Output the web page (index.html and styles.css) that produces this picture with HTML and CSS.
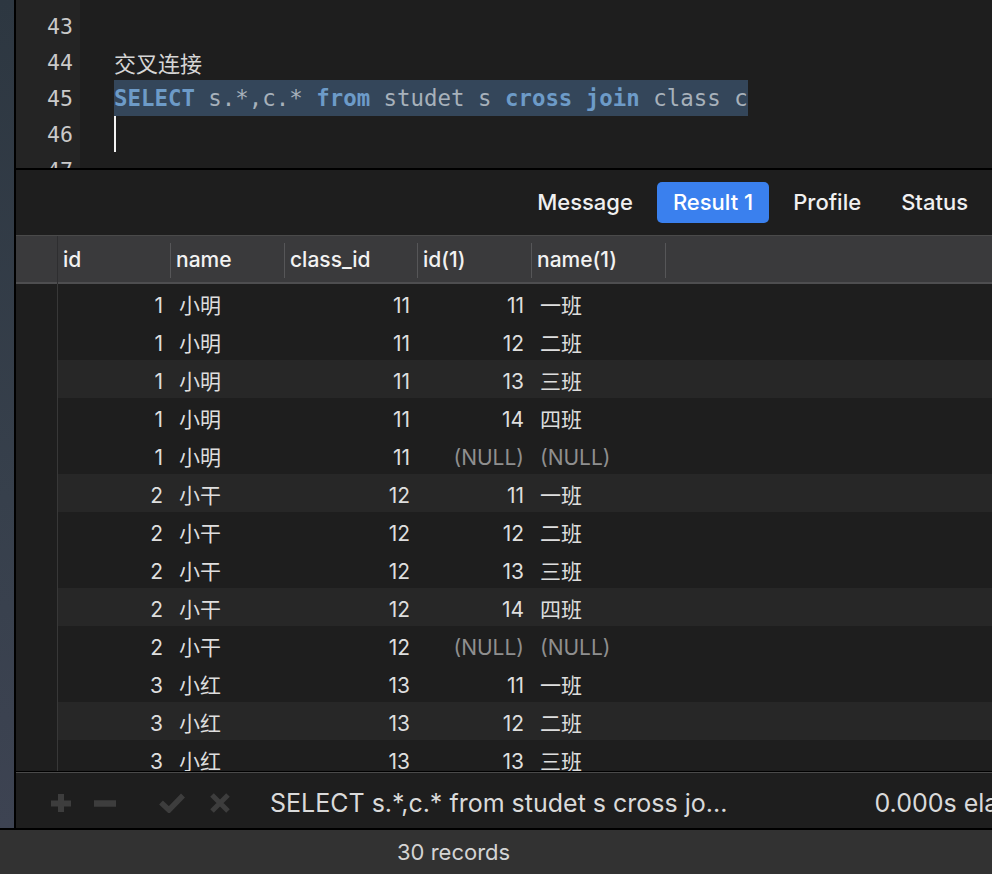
FILE: index.html
```html
<!DOCTYPE html>
<html lang="zh">
<head>
<meta charset="utf-8">
<title>Query</title>
<link rel="stylesheet" href="styles.css">
</head>
<body>
<div class="app">
  <div class="workspace">
    <div class="sidebar"></div>
    <div class="main">
      <div class="editor">
        <div class="gutter">
          <div class="ln">43</div>
          <div class="ln">44</div>
          <div class="ln">45</div>
          <div class="ln">46</div>
          <div class="ln">47</div>
        </div>
        <div class="code">
          <div class="line"></div>
          <div class="line comment">交叉连接</div>
          <div class="line"><span class="sel"><span class="kw">SELECT</span> s.*,c.* <span class="kw">from</span> studet s <span class="kw">cross</span> <span class="kw">join</span> class c</span></div>
          <div class="line"><span class="caret"></span></div>
          <div class="line"></div>
        </div>
      </div>
      <div class="tabs">
        <div class="tab">Message</div>
        <div class="tab active">Result 1</div>
        <div class="tab">Profile</div>
        <div class="tab">Status</div>
      </div>
      <div class="grid">
        <div class="head">
          <div class="hc first"></div>
          <div class="hc">id</div>
          <div class="hc">name</div>
          <div class="hc">class_id</div>
          <div class="hc">id(1)</div>
          <div class="hc">name(1)</div>
          <div class="hc rest"></div>
        </div>
        <div class="rows">
          <div class="row"><div class="c first"></div><div class="c num">1</div><div class="c">小明</div><div class="c num">11</div><div class="c num">11</div><div class="c">一班</div><div class="c"></div></div>
          <div class="row"><div class="c first"></div><div class="c num">1</div><div class="c">小明</div><div class="c num">11</div><div class="c num">12</div><div class="c">二班</div><div class="c"></div></div>
          <div class="row alt"><div class="c first"></div><div class="c num">1</div><div class="c">小明</div><div class="c num">11</div><div class="c num">13</div><div class="c">三班</div><div class="c"></div></div>
          <div class="row"><div class="c first"></div><div class="c num">1</div><div class="c">小明</div><div class="c num">11</div><div class="c num">14</div><div class="c">四班</div><div class="c"></div></div>
          <div class="row"><div class="c first"></div><div class="c num">1</div><div class="c">小明</div><div class="c num">11</div><div class="c num null">(NULL)</div><div class="c null">(NULL)</div><div class="c"></div></div>
          <div class="row alt"><div class="c first"></div><div class="c num">2</div><div class="c">小干</div><div class="c num">12</div><div class="c num">11</div><div class="c">一班</div><div class="c"></div></div>
          <div class="row"><div class="c first"></div><div class="c num">2</div><div class="c">小干</div><div class="c num">12</div><div class="c num">12</div><div class="c">二班</div><div class="c"></div></div>
          <div class="row"><div class="c first"></div><div class="c num">2</div><div class="c">小干</div><div class="c num">12</div><div class="c num">13</div><div class="c">三班</div><div class="c"></div></div>
          <div class="row alt"><div class="c first"></div><div class="c num">2</div><div class="c">小干</div><div class="c num">12</div><div class="c num">14</div><div class="c">四班</div><div class="c"></div></div>
          <div class="row"><div class="c first"></div><div class="c num">2</div><div class="c">小干</div><div class="c num">12</div><div class="c num null">(NULL)</div><div class="c null">(NULL)</div><div class="c"></div></div>
          <div class="row"><div class="c first"></div><div class="c num">3</div><div class="c">小红</div><div class="c num">13</div><div class="c num">11</div><div class="c">一班</div><div class="c"></div></div>
          <div class="row alt"><div class="c first"></div><div class="c num">3</div><div class="c">小红</div><div class="c num">13</div><div class="c num">12</div><div class="c">二班</div><div class="c"></div></div>
          <div class="row"><div class="c first"></div><div class="c num">3</div><div class="c">小红</div><div class="c num">13</div><div class="c num">13</div><div class="c">三班</div><div class="c"></div></div>
        </div>
      </div>
      <div class="toolbar">
        <svg class="ico plus" width="22" height="20" viewBox="0 0 22 20"><path d="M11 1v18M1 10.5h20" stroke="#3d3d3d" stroke-width="6" fill="none"/></svg>
        <svg class="ico minus" width="22" height="20" viewBox="0 0 22 20"><path d="M0 10.5h22" stroke="#3d3d3d" stroke-width="6.5" fill="none"/></svg>
        <svg class="ico check" width="26" height="20" viewBox="0 0 26 20"><path d="M2 9.5l8 7.5L24 2.5" stroke="#3d3d3d" stroke-width="5.5" fill="none"/></svg>
        <svg class="ico cross" width="20" height="20" viewBox="0 0 20 20"><path d="M2 2l16 16M18 2L2 18" stroke="#3d3d3d" stroke-width="5" fill="none"/></svg>
        <div class="sql">SELECT s.*,c.* from studet s cross jo...</div>
        <div class="elapsed">0.000s elapsed</div>
      </div>
    </div>
  </div>
  <div class="statusbar">30 records</div>
</div>
</body>
</html>
```

FILE: styles.css
```css
* { box-sizing: border-box; }
html, body { margin: 0; padding: 0; }
body {
  background: #1e1e1e;
  font-family: "Inter", "Noto Sans CJK SC", sans-serif;
  overflow: hidden;
}
.app {
  width: 992px;
  height: 874px;
  display: flex;
  flex-direction: column;
  overflow: hidden;
}
.workspace {
  flex: 1;
  display: flex;
  min-height: 0;
  border-bottom: 2px solid #000;
}
.sidebar {
  width: 16px;
  flex: none;
  background: linear-gradient(#2d3741, #37404c 60%, #3d4352);
  border-right: 2px solid #000;
}
.main {
  flex: 1;
  display: flex;
  flex-direction: column;
  min-width: 0;
}
.editor {
  height: 170px;
  flex: none;
  display: flex;
  overflow: hidden;
  border-bottom: 2px solid #000;
  background: #1e1e1e;
}
.gutter {
  width: 64px;
  flex: none;
  background: #242424;
  padding-top: 8px;
  padding-right: 7px;
  font-family: "DejaVu Sans Mono", monospace;
  font-size: 21.5px;
  color: #cacaca;
  text-align: right;
}
.ln { height: 36px; line-height: 37px; }
.code {
  flex: 1;
  padding-top: 8px;
  padding-left: 34px;
  font-family: "DejaVu Sans Mono", "Noto Sans CJK SC", monospace;
  font-size: 22.4px;
  color: #a7b1bb;
}
.line { height: 36px; line-height: 36px; white-space: pre; display: flex; }
.comment {
  font-family: "Noto Sans CJK SC", sans-serif;
  font-size: 22px;
  color: #d6d6d6;
}
.sel { background: #34465a; height: 36px; display: inline-block; line-height: 37px; }
.kw { color: #6d9bc8; font-weight: bold; }
.caret { width: 2px; height: 36px; background: #f2f2f2; display: inline-block; }
.tabs {
  height: 66px;
  flex: none;
  display: flex;
  justify-content: flex-end;
  align-items: center;
  gap: 8px;
  padding-right: 8px;
  background: #1e1e1e;
  border-bottom: 1px solid #4a4a4a;
}
.tab {
  height: 41px;
  line-height: 41px;
  padding: 0 16px;
  font-size: 22px;
  font-weight: 500;
  color: #f0f0f0;
  border-radius: 5px;
}
.tab.active { background: #3a80ee; color: #fff; }
.grid {
  flex: 1;
  min-height: 0;
  display: flex;
  flex-direction: column;
  overflow: hidden;
}
.head, .row {
  display: grid;
  grid-template-columns: 42px 113px 114px 133px 114px 134px 1fr;
}
.head {
  height: 48px;
  flex: none;
  background: #3a3a3c;
  border-bottom: 2px solid #4e4e50;
}
.hc {
  position: relative;
  padding-left: 5px;
  line-height: 48px;
  font-size: 21px;
  font-weight: 500;
  color: #f2f2f2;
}
.hc.first { border-right: 1px solid #2e2e30; }
.hc:not(.first):not(.rest)::after {
  content: "";
  position: absolute;
  right: 0;
  top: 7px;
  bottom: 6px;
  width: 1px;
  background: #565658;
}
.rows { flex: 1; overflow: hidden; }
.row { height: 38px; background: #1e1e1e; }
.row.alt { background: #272727; }
.c {
  line-height: 38px;
  padding: 3px 8px 0;
  font-size: 21px;
  color: #dedede;
  white-space: nowrap;
}
.c.first { border-right: 1px solid #383838; background: #1e1e1e; }
.c.num { text-align: right; }
.c.null { color: #8f8f8f; }
.toolbar {
  height: 57px;
  flex: none;
  display: flex;
  align-items: center;
  padding-left: 34px;
  padding-top: 6px;
  border-top: 1px solid #000;
  box-shadow: inset 0 1px 0 #4a4a4a;
  background: #1e1e1e;
  white-space: nowrap;
  overflow: hidden;
}
.ico { flex: none; display: block; }
.minus { margin-left: 22px; }
.check { margin-left: 43px; }
.cross { margin-left: 25px; }
.sql {
  margin-left: 40px;
  font-size: 25px;
  color: #dadada;
}
.elapsed {
  margin-left: 147px;
  font-size: 25px;
  color: #dadada;
}
.statusbar {
  height: 44px;
  flex: none;
  background: #323232;
  padding-left: 397px;
  line-height: 44px;
  font-size: 22px;
  color: #d4d4d4;
}
```
